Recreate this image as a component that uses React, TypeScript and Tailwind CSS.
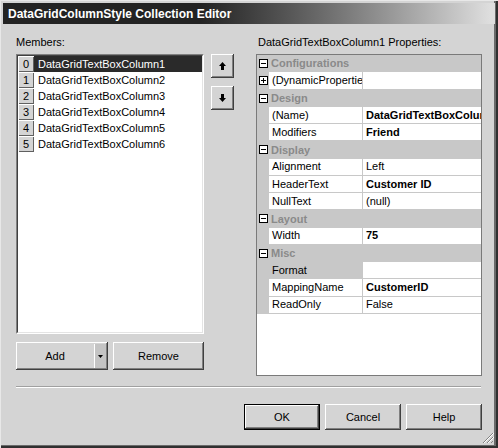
import React from "react";

const raised =
  "bg-[#d4d4d4] shadow-[inset_-1px_-1px_#404040,inset_1px_1px_#ffffff,inset_-2px_-2px_#808080]";

const members = [
  "DataGridTextBoxColumn1",
  "DataGridTextBoxColumn2",
  "DataGridTextBoxColumn3",
  "DataGridTextBoxColumn4",
  "DataGridTextBoxColumn5",
  "DataGridTextBoxColumn6",
];

type Row =
  | { kind: "cat"; label: string }
  | { kind: "prop"; name: string; value: string; bold?: boolean; expand?: boolean; grayName?: boolean };

const rows: Row[] = [
  { kind: "cat", label: "Configurations" },
  { kind: "prop", name: "(DynamicProperties)", value: "", expand: true },
  { kind: "cat", label: "Design" },
  { kind: "prop", name: "(Name)", value: "DataGridTextBoxColumn1", bold: true },
  { kind: "prop", name: "Modifiers", value: "Friend", bold: true },
  { kind: "cat", label: "Display" },
  { kind: "prop", name: "Alignment", value: "Left" },
  { kind: "prop", name: "HeaderText", value: "Customer ID", bold: true },
  { kind: "prop", name: "NullText", value: "(null)" },
  { kind: "cat", label: "Layout" },
  { kind: "prop", name: "Width", value: "75", bold: true },
  { kind: "cat", label: "Misc" },
  { kind: "prop", name: "Format", value: "", grayName: true },
  { kind: "prop", name: "MappingName", value: "CustomerID", bold: true },
  { kind: "prop", name: "ReadOnly", value: "False" },
];

function BoxIcon({ plus }: { plus?: boolean }) {
  return (
    <svg width="9" height="9" viewBox="0 0 9 9">
      <rect x="0.5" y="0.5" width="8" height="8" fill="#fff" stroke="#000" />
      <line x1="2" y1="4.5" x2="7" y2="4.5" stroke="#000" />
      {plus && <line x1="4.5" y1="2" x2="4.5" y2="7" stroke="#000" />}
    </svg>
  );
}

function Arrow({ down }: { down?: boolean }) {
  return (
    <svg width="7" height="8" viewBox="0 0 7 8" className={down ? "rotate-180" : ""}>
      <polygon points="3.5,0 7,4 5,4 5,8 2,8 2,4 0,4" fill="#000" />
    </svg>
  );
}

function Btn({ label, w, isDefault }: { label: string; w: string; isDefault?: boolean }) {
  return (
    <div
      className={`${w} h-[26px] flex items-center justify-center ${
        isDefault
          ? "bg-[#d4d4d4] shadow-[inset_0_0_0_1px_#000000,inset_-2px_-2px_#404040,inset_2px_2px_#ffffff,inset_-3px_-3px_#808080]"
          : raised
      }`}
    >
      {label}
    </div>
  );
}

export default function App() {
  return (
    <div
      className="w-[498px] h-[448px] bg-[#d4d4d4] text-[11px] text-black overflow-hidden shadow-[inset_1px_1px_#e8e8e8,inset_-2px_-2px_#303030,inset_-4px_-3px_#6a6a6a]"
      style={{ fontFamily: '"Liberation Sans", Arial, sans-serif' }}
    >
      {/* title bar */}
      <div className="mx-[3px] pt-[3px]">
        <div className="h-[21px] pl-[5px] flex items-center bg-linear-to-r from-[#232323] from-[40%] to-[#dedede] to-[99%] text-white font-bold text-[12px]">
          DataGridColumnStyle Collection Editor
        </div>
      </div>

      <div className="flex mt-[12px] pl-[16px]">
        {/* members */}
        <div className="w-[188px] flex flex-col">
          <div className="h-[18px] leading-[13px]">Members:</div>
          <div className="h-[280px] border-t border-l border-[#808080] border-r border-b border-r-[#ffffff] border-b-[#ffffff]">
            <div className="h-full bg-white border-t border-l border-[#404040] border-r border-b border-r-[#e4e4e4] border-b-[#e4e4e4]">
              {members.map((m, i) => (
                <div key={m} className="flex h-[16px]">
                  <div className="w-[16px] bg-[#d4d4d4] shadow-[inset_1px_1px_#ffffff,inset_-1px_-1px_#606060] flex items-center justify-center">
                    {i}
                  </div>
                  <div
                    className={`flex-1 pl-[4px] flex items-center ${
                      i === 0 ? "bg-[#2a2a2a] text-white" : ""
                    }`}
                  >
                    {m}
                  </div>
                </div>
              ))}
            </div>
          </div>
          <div className="flex mt-[8px] gap-[5px]">
            <div className={`w-[92px] h-[28px] flex ${raised}`}>
              <div className="w-[78px] flex items-center justify-center">Add</div>
              <div className="w-[12px] my-[2px] bg-[#c4c4c4] border-l border-white flex items-center justify-center">
                <svg width="5" height="3" viewBox="0 0 5 3">
                  <polygon points="0,0 5,0 2.5,3" fill="#000" />
                </svg>
              </div>
            </div>
            <div className={`w-[91px] h-[28px] flex items-center justify-center ${raised}`}>Remove</div>
          </div>
        </div>

        {/* move buttons */}
        <div className="ml-[7px] pt-[18px] flex flex-col gap-[8px]">
          <div className={`w-[23px] h-[24px] flex items-center justify-center ${raised}`}>
            <Arrow />
          </div>
          <div className={`w-[23px] h-[24px] flex items-center justify-center ${raised}`}>
            <Arrow down />
          </div>
        </div>

        {/* properties */}
        <div className="ml-[22px] w-[226px] flex flex-col">
          <div className="h-[18px] leading-[13px] pl-[2px]">DataGridTextBoxColumn1 Properties:</div>
          <div className="h-[322px] border border-[#7a7a7a] bg-white">
            {rows.map((r, i) =>
              r.kind === "cat" ? (
                <div key={i} className="h-[17.25px] flex items-center bg-[#c8c8c8]">
                  <div className="w-[12px] flex justify-center">
                    <BoxIcon />
                  </div>
                  <div className="pl-[2px] font-bold text-[#8a8a8a]">{r.label}</div>
                </div>
              ) : (
                <div key={i} className="h-[17.25px] flex">
                  <div className="w-[12px] bg-[#c8c8c8] flex items-center justify-center">
                    {r.expand && <BoxIcon plus />}
                  </div>
                  <div
                    className={`w-[94px] pl-[3px] flex items-center overflow-hidden whitespace-nowrap border-r border-b border-[#c8c8c8] ${
                      r.grayName ? "bg-[#c8c8c8]" : "bg-white"
                    }`}
                  >
                    {r.name}
                  </div>
                  <div
                    className={`flex-1 pl-[3px] flex items-center overflow-hidden whitespace-nowrap border-b border-[#c8c8c8] ${
                      r.bold ? "font-bold" : ""
                    }`}
                  >
                    {r.value}
                  </div>
                </div>
              )
            )}
          </div>
        </div>
      </div>

      {/* separator */}
      <div className="mt-[10px] ml-[16px] w-[465px] border-t border-[#a0a0a0] border-b border-b-white" />

      <div className="flex justify-end gap-[5px] mt-[16px] pr-[16px]">
        <Btn label="OK" w="w-[76px]" isDefault />
        <Btn label="Cancel" w="w-[76px]" />
        <Btn label="Help" w="w-[76px]" />
      </div>

      {/* size grip */}
      <div className="flex justify-end pr-[4px] mt-[2px]">
        <svg width="12" height="12" viewBox="0 0 12 12">
          <line x1="11" y1="1" x2="1" y2="11" stroke="#808080" />
          <line x1="12" y1="1" x2="2" y2="11" stroke="#ffffff" />
          <line x1="11" y1="5" x2="5" y2="11" stroke="#808080" />
          <line x1="12" y1="5" x2="6" y2="11" stroke="#ffffff" />
          <line x1="11" y1="9" x2="9" y2="11" stroke="#808080" />
        </svg>
      </div>
    </div>
  );
}
